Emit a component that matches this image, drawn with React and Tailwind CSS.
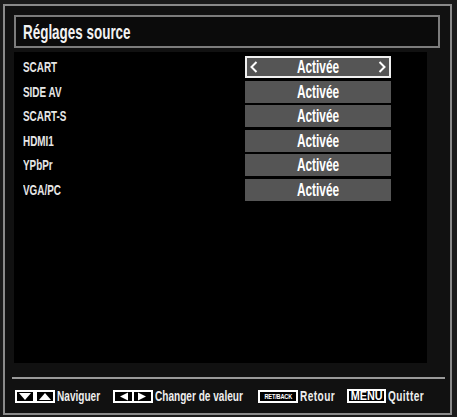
import React from "react";

const font = { fontFamily: '"Liberation Sans", Arial, sans-serif' };

const rows = ["SCART", "SIDE AV", "SCART-S", "HDMI1", "YPbPr", "VGA/PC"];

function Chevron({ dir }) {
  return (
    <svg width="8" height="12" viewBox="0 0 8 12" className="shrink-0">
      <path
        d={dir === "left" ? "M6.5 1 L1.5 6 L6.5 11" : "M1.5 1 L6.5 6 L1.5 11"}
        fill="none"
        stroke="#fff"
        strokeWidth="2"
      />
    </svg>
  );
}

function Tri({ d }) {
  return (
    <div className="w-[20px] h-[13px] border-2 border-white bg-black flex items-center justify-center">
      <svg width="14" height="9" viewBox="0 0 14 9">
        <path d={d === "down" ? "M1 1 L13 1 L7 8 Z" : "M1 8 L13 8 L7 1 Z"} fill="#fff" />
      </svg>
    </div>
  );
}

export default function App() {
  return (
    <div className="w-[457px] h-[417px] bg-[#1a1a1a] pl-[3px] pt-[4px] overflow-hidden" style={font}>
      <div className="w-[449px] h-[411px] border-2 border-[#8a8a8a] bg-[#111111] flex flex-col">
        {/* Title */}
        <div className="ml-[9px] mt-[9px] w-[426px] h-[33px] border-2 border-[#7c7c7c] bg-[#0b0b0b] flex items-center pl-[7px]">
          <span className="inline-block origin-left scale-x-[0.64] whitespace-nowrap text-[21px] font-bold text-[#f2f2f2] leading-none">
            Réglages source
          </span>
        </div>

        {/* Content */}
        <div className="ml-[9px] mt-[4px] w-[413px] h-[311px] bg-black pt-[4px] pl-[9px] flex flex-col gap-[2.5px]">
          {rows.map((r, i) => (
            <div key={r} className="flex items-center h-[22px]">
              <div className="w-[222px] leading-none">
                <span className="inline-block origin-left scale-x-[0.66] whitespace-nowrap text-[15px] font-bold text-[#e6e6e6]">
                  {r}
                </span>
              </div>
              <div
                className={
                  "w-[146px] h-[22px] bg-[#555555] flex items-center justify-between text-white leading-none " +
                  (i === 0 ? "border-2 border-[#f0f0f0] px-[3px]" : "px-[5px]")
                }
              >
                {i === 0 ? <Chevron dir="left" /> : <span className="w-[8px]" />}
                <span className="inline-block origin-center scale-x-[0.66] whitespace-nowrap text-[18px] font-bold">
                  Activée
                </span>
                {i === 0 ? <Chevron dir="right" /> : <span className="w-[8px]" />}
              </div>
            </div>
          ))}
        </div>

        {/* Separator */}
        <div className="ml-[7px] mt-[14px] w-[433px] h-[2px] bg-[#9a9a9a]" />

        {/* Footer */}
        <div className="flex-1 flex items-center pl-[10px] text-[14px] font-bold text-[#eeeeee] leading-none">
          <div className="flex items-center">
            <Tri d="down" />
            <Tri d="up" />
          </div>
          <div className="w-[58px] pl-[2px]">
            <span className="inline-block origin-left scale-x-[0.72] whitespace-nowrap">Naviguer</span>
          </div>

          <div className="w-[40px] h-[13px] border-2 border-white bg-black flex items-center justify-between px-[2px]">
            <svg width="14" height="9" viewBox="0 0 14 9">
              <path d="M11 0.5 L11 8.5 L3 4.5 Z" fill="#fff" />
            </svg>
            <div className="w-[2px] h-[11px] bg-white" />
            <svg width="14" height="9" viewBox="0 0 14 9">
              <path d="M3 0.5 L3 8.5 L11 4.5 Z" fill="#fff" />
            </svg>
          </div>
          <div className="w-[105px] pl-[2px]">
            <span className="inline-block origin-left scale-x-[0.72] whitespace-nowrap">Changer de valeur</span>
          </div>

          <div className="w-[40px] h-[13px] border-2 border-white bg-black flex items-center justify-center">
            <span className="inline-block scale-x-[0.8] text-[7px] font-bold text-white tracking-[-0.2px]">
              RET/BACK
            </span>
          </div>
          <div className="w-[49px] pl-[2px]">
            <span className="inline-block origin-left scale-x-[0.72] whitespace-nowrap tracking-[0.6px]">Retour</span>
          </div>

          <div className="w-[39px] h-[14px] border-2 border-white bg-black flex items-center justify-center">
            <span className="inline-block scale-x-[0.9] text-[12px] font-bold text-white">MENU</span>
          </div>
          <div className="pl-[2px]">
            <span className="inline-block origin-left scale-x-[0.72] whitespace-nowrap tracking-[0.6px]">Quitter</span>
          </div>
        </div>
      </div>
    </div>
  );
}
